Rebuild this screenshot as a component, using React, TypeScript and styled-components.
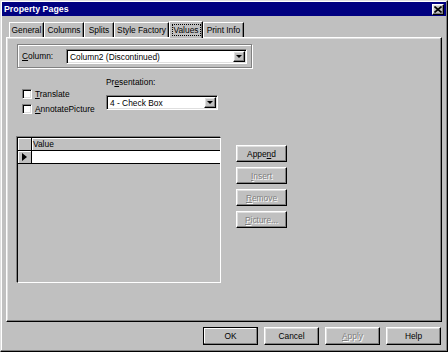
import React from 'react';
import styled, { createGlobalStyle, css } from 'styled-components';

const GlobalStyle = createGlobalStyle`
  html, body {
    margin: 0;
    padding: 0;
    background: #c0c0c0;
  }
  body {
    font-family: 'Liberation Sans', Arial, sans-serif;
    font-size: 8.4px;
    color: #000;
  }
  * {
    box-sizing: border-box;
  }
`;

const raised = css`
  border: 1px solid;
  border-color: #fff #000 #000 #fff;
  box-shadow: inset -1px -1px 0 #808080, inset 1px 1px 0 #dfdfdf;
`;

const sunken = css`
  border: 1px solid;
  border-color: #808080 #fff #fff #808080;
  box-shadow: inset 1px 1px 0 #000, inset -1px -1px 0 #dfdfdf;
`;

const tabs = [
  { label: 'General', w: 35 },
  { label: 'Columns', w: 40 },
  { label: 'Splits', w: 30 },
  { label: 'Style Factory', w: 55 },
  { label: 'Values', w: 34, active: true },
  { label: 'Print Info', w: 41 },
];

export default function App() {
  return (
    <>
      <GlobalStyle />
      <Window>
        <TitleBar>
          <Title>Property Pages</Title>
          <CloseButton>
            <svg width="8" height="7" viewBox="0 0 8 7">
              <path d="M0.5 0.5 L7.5 6.5 M7.5 0.5 L0.5 6.5" stroke="#000" strokeWidth="1.6" />
            </svg>
          </CloseButton>
        </TitleBar>
        <Body>
          <TabStrip>
            {tabs.map((t) => (
              <Tab key={t.label} $w={t.w} $active={t.active}>
                <TabLabel $active={t.active}>{t.label}</TabLabel>
              </Tab>
            ))}
          </TabStrip>
          <Panel>
            <ColumnGroup>
              <FieldLabel $w={44}>
                <Key>C</Key>olumn:
              </FieldLabel>
              <Combo $w={181}>
                <ComboText>Column2 (Discontinued)</ComboText>
                <DropButton>
                  <DownArrow />
                </DropButton>
              </Combo>
            </ColumnGroup>
            <OptionsRow>
              <CheckList>
                <CheckRow>
                  <CheckBox />
                  <span>
                    <Key>T</Key>ranslate
                  </span>
                </CheckRow>
                <CheckRow>
                  <CheckBox />
                  <span>
                    <Key>A</Key>nnotatePicture
                  </span>
                </CheckRow>
              </CheckList>
              <PresentField>
                <FieldLabel>
                  Pr<Key>e</Key>sentation:
                </FieldLabel>
                <Combo $w={112}>
                  <ComboText>4 - Check Box</ComboText>
                  <DropButton>
                    <DownArrow />
                  </DropButton>
                </Combo>
              </PresentField>
            </OptionsRow>
            <GridRow>
              <Grid>
                <GridHeader>
                  <Selector $header />
                  <HeaderCell>Value</HeaderCell>
                </GridHeader>
                <GridLine>
                  <Selector>
                    <RowArrow />
                  </Selector>
                  <Cell />
                </GridLine>
              </Grid>
              <SideButtons>
                <Button $w={51} $h={17}>
                  Appe<Key>n</Key>d
                </Button>
                <Button $w={51} $h={17} $disabled>
                  <Key>I</Key>nsert
                </Button>
                <Button $w={51} $h={17} $disabled>
                  <Key>R</Key>emove
                </Button>
                <Button $w={51} $h={17} $disabled>
                  <Key>P</Key>icture...
                </Button>
              </SideButtons>
            </GridRow>
          </Panel>
          <Footer>
            <Button $w={55} $h={18} $default>
              OK
            </Button>
            <Button $w={55} $h={18}>
              Cancel
            </Button>
            <Button $w={55} $h={18} $disabled>
              <Key>A</Key>pply
            </Button>
            <Button $w={55} $h={18}>
              Help
            </Button>
          </Footer>
        </Body>
      </Window>
    </>
  );
}

const Window = styled.div`
  width: 448px;
  height: 352px;
  padding: 1px;
  background: #c0c0c0;
  display: flex;
  flex-direction: column;
  border: 1px solid;
  border-color: #dfdfdf #000 #000 #dfdfdf;
  box-shadow: inset -1px -1px 0 #808080, inset 1px 1px 0 #fff;
`;

const TitleBar = styled.div`
  height: 14px;
  background: #000080;
  display: flex;
  align-items: center;
  justify-content: space-between;
  padding: 0 2px 0 2px;
`;

const Title = styled.div`
  color: #fff;
  font-weight: bold;
  font-size: 8.8px;
`;

const CloseButton = styled.div`
  ${raised};
  width: 12px;
  height: 11px;
  background: #c0c0c0;
  display: flex;
  align-items: center;
  justify-content: center;
`;

const Body = styled.div`
  flex: 1;
  padding: 0 4px;
  display: flex;
  flex-direction: column;
`;

const TabStrip = styled.div`
  display: flex;
  align-items: flex-end;
  height: 18px;
  margin-top: 3px;
  padding-left: 3px;
`;

const Tab = styled.div<{ $w: number; $active?: boolean }>`
  width: ${(p) => p.$w}px;
  height: ${(p) => (p.$active ? 17 : 15)}px;
  display: flex;
  align-items: center;
  justify-content: center;
  border-top: 1px solid #fff;
  border-left: 1px solid #fff;
  border-right: 1px solid #000;
  box-shadow: inset -1px 0 0 #808080;
  background: #c0c0c0;
  ${(p) =>
    p.$active &&
    css`
      position: relative;
      z-index: 1;
      margin-bottom: -1px;
      height: 17px;
    `}
`;

const TabLabel = styled.span<{ $active?: boolean }>`
  padding: 0 1px;
  line-height: 10px;
  outline: ${(p) => (p.$active ? '1px dotted #000' : 'none')};
`;

const Panel = styled.div`
  ${raised};
  height: 285px;
  padding: 6px 0 0 10px;
  display: flex;
  flex-direction: column;
`;

const ColumnGroup = styled.div`
  width: 235px;
  height: 24px;
  display: flex;
  align-items: center;
  padding: 1px 4px 0;
  border: 1px solid #808080;
  box-shadow: 1px 1px 0 #fff, inset 1px 1px 0 #fff;
`;

const FieldLabel = styled.div<{ $w?: number }>`
  width: ${(p) => (p.$w ? `${p.$w}px` : 'auto')};
  line-height: 13px;
  white-space: nowrap;
`;

const Key = styled.span`
  text-decoration: underline;
`;

const Combo = styled.div<{ $w: number }>`
  ${sunken};
  width: ${(p) => p.$w}px;
  height: 15px;
  background: #fff;
  display: flex;
  align-items: center;
  padding: 1px;
`;

const ComboText = styled.div`
  flex: 1;
  padding-left: 2px;
  white-space: nowrap;
  overflow: hidden;
`;

const DropButton = styled.div`
  ${raised};
  width: 12px;
  height: 11px;
  background: #c0c0c0;
  display: flex;
  align-items: center;
  justify-content: center;
`;

const DownArrow = styled.div`
  width: 0;
  height: 0;
  border-left: 3px solid transparent;
  border-right: 3px solid transparent;
  border-top: 3px solid #000;
`;

const OptionsRow = styled.div`
  display: flex;
  align-items: flex-start;
  height: 40px;
  margin-top: 8px;
`;

const CheckList = styled.div`
  width: 88px;
  padding: 10px 0 0 5px;
  display: flex;
  flex-direction: column;
`;

const CheckRow = styled.div`
  height: 15px;
  display: flex;
  align-items: center;
  gap: 3px;
  white-space: nowrap;
`;

const CheckBox = styled.div`
  ${sunken};
  width: 10px;
  height: 10px;
  background: #fff;
`;

const PresentField = styled.div`
  display: flex;
  flex-direction: column;
  gap: 6px;
  padding-left: 1px;
`;

const GridRow = styled.div`
  display: flex;
  align-items: flex-start;
  margin-top: 21px;
`;

const Grid = styled.div`
  width: 204px;
  height: 146px;
  background: #c0c0c0;
  border: 1px solid;
  border-color: #000 #fff #fff #000;
  box-shadow: -1px -1px 0 #808080;
  display: flex;
  flex-direction: column;
`;

const GridHeader = styled.div`
  height: 13px;
  display: flex;
  border-bottom: 1px solid #000;
`;

const GridLine = styled.div`
  height: 13px;
  display: flex;
  border-bottom: 1px solid #000;
`;

const Selector = styled.div<{ $header?: boolean }>`
  width: 14px;
  border-right: 1px solid #000;
  box-shadow: inset 1px 1px 0 #fff;
  display: flex;
  align-items: center;
  justify-content: center;
  background: #c0c0c0;
`;

const RowArrow = styled.div`
  width: 0;
  height: 0;
  border-left: 5px solid #000;
  border-top: 4px solid transparent;
  border-bottom: 4px solid transparent;
`;

const HeaderCell = styled.div`
  flex: 1;
  padding-left: 1px;
  line-height: 12px;
  box-shadow: inset 1px 1px 0 #fff;
`;

const Cell = styled.div`
  flex: 1;
  background: #fff;
`;

const SideButtons = styled.div`
  display: flex;
  flex-direction: column;
  gap: 5px;
  margin-left: 15px;
  padding-top: 8px;
`;

const Button = styled.div<{ $w: number; $h: number; $disabled?: boolean; $default?: boolean }>`
  ${raised};
  width: ${(p) => p.$w}px;
  height: ${(p) => p.$h}px;
  background: #c0c0c0;
  display: flex;
  align-items: center;
  justify-content: center;
  white-space: nowrap;
  color: ${(p) => (p.$disabled ? '#808080' : '#000')};
  text-shadow: ${(p) => (p.$disabled ? '1px 1px 0 #fff' : 'none')};
  ${(p) =>
    p.$default &&
    css`
      border-color: #000;
      box-shadow: inset -1px -1px 0 #808080, inset 1px 1px 0 #fff;
    `}
`;

const Footer = styled.div`
  display: flex;
  justify-content: flex-end;
  gap: 6px;
  margin-top: 5px;
  padding-right: 1px;
`;
